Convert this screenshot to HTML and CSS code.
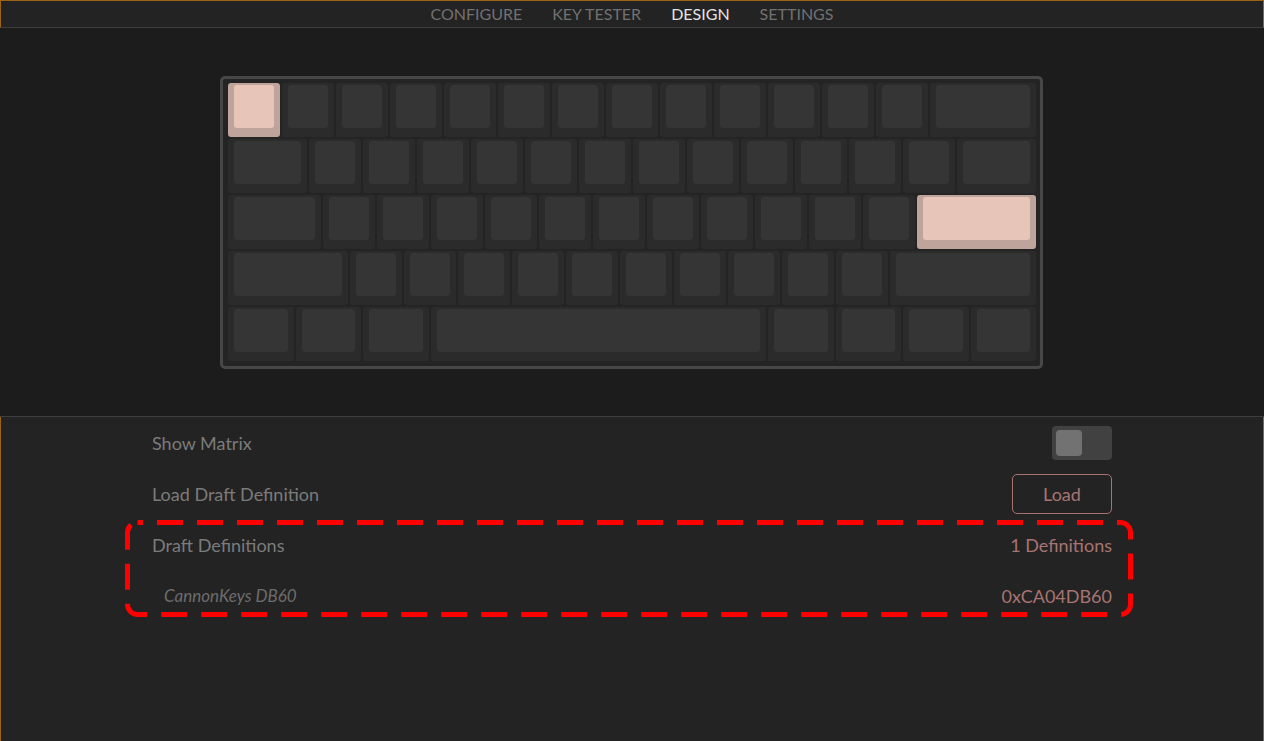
FILE: index.html
```html
<!DOCTYPE html>
<html lang="en">
<head>
<meta charset="utf-8">
<title>VIA - Design</title>
<link rel="stylesheet" href="styles.css">
</head>
<body>
<div class="app">
  <nav class="topbar">
    <a class="tab">CONFIGURE</a>
    <a class="tab">KEY TESTER</a>
    <a class="tab active">DESIGN</a>
    <a class="tab">SETTINGS</a>
  </nav>

  <section class="stage">
    <div class="board">
      <div class="row">
        <div class="key u1 sel"><div class="cap"></div></div>
        <div class="key u1"><div class="cap"></div></div>
        <div class="key u1"><div class="cap"></div></div>
        <div class="key u1"><div class="cap"></div></div>
        <div class="key u1"><div class="cap"></div></div>
        <div class="key u1"><div class="cap"></div></div>
        <div class="key u1"><div class="cap"></div></div>
        <div class="key u1"><div class="cap"></div></div>
        <div class="key u1"><div class="cap"></div></div>
        <div class="key u1"><div class="cap"></div></div>
        <div class="key u1"><div class="cap"></div></div>
        <div class="key u1"><div class="cap"></div></div>
        <div class="key u1"><div class="cap"></div></div>
        <div class="key u2"><div class="cap"></div></div>
      </div>
      <div class="row">
        <div class="key u15"><div class="cap"></div></div>
        <div class="key u1"><div class="cap"></div></div>
        <div class="key u1"><div class="cap"></div></div>
        <div class="key u1"><div class="cap"></div></div>
        <div class="key u1"><div class="cap"></div></div>
        <div class="key u1"><div class="cap"></div></div>
        <div class="key u1"><div class="cap"></div></div>
        <div class="key u1"><div class="cap"></div></div>
        <div class="key u1"><div class="cap"></div></div>
        <div class="key u1"><div class="cap"></div></div>
        <div class="key u1"><div class="cap"></div></div>
        <div class="key u1"><div class="cap"></div></div>
        <div class="key u1"><div class="cap"></div></div>
        <div class="key u15"><div class="cap"></div></div>
      </div>
      <div class="row">
        <div class="key u175"><div class="cap"></div></div>
        <div class="key u1"><div class="cap"></div></div>
        <div class="key u1"><div class="cap"></div></div>
        <div class="key u1"><div class="cap"></div></div>
        <div class="key u1"><div class="cap"></div></div>
        <div class="key u1"><div class="cap"></div></div>
        <div class="key u1"><div class="cap"></div></div>
        <div class="key u1"><div class="cap"></div></div>
        <div class="key u1"><div class="cap"></div></div>
        <div class="key u1"><div class="cap"></div></div>
        <div class="key u1"><div class="cap"></div></div>
        <div class="key u1"><div class="cap"></div></div>
        <div class="key u225 sel"><div class="cap"></div></div>
      </div>
      <div class="row">
        <div class="key u225"><div class="cap"></div></div>
        <div class="key u1"><div class="cap"></div></div>
        <div class="key u1"><div class="cap"></div></div>
        <div class="key u1"><div class="cap"></div></div>
        <div class="key u1"><div class="cap"></div></div>
        <div class="key u1"><div class="cap"></div></div>
        <div class="key u1"><div class="cap"></div></div>
        <div class="key u1"><div class="cap"></div></div>
        <div class="key u1"><div class="cap"></div></div>
        <div class="key u1"><div class="cap"></div></div>
        <div class="key u1"><div class="cap"></div></div>
        <div class="key u275"><div class="cap"></div></div>
      </div>
      <div class="row">
        <div class="key u125"><div class="cap"></div></div>
        <div class="key u125"><div class="cap"></div></div>
        <div class="key u125"><div class="cap"></div></div>
        <div class="key u625"><div class="cap"></div></div>
        <div class="key u125"><div class="cap"></div></div>
        <div class="key u125"><div class="cap"></div></div>
        <div class="key u125"><div class="cap"></div></div>
        <div class="key u125"><div class="cap"></div></div>
      </div>
    </div>
  </section>

  <section class="panel">
    <div class="settings">
      <div class="setting">
        <span class="label">Show Matrix</span>
        <div class="toggle"><div class="knob"></div></div>
      </div>
      <div class="setting">
        <span class="label">Load Draft Definition</span>
        <button class="btn">Load</button>
      </div>
      <div class="setting">
        <span class="label">Draft Definitions</span>
        <span class="value">1 Definitions</span>
      </div>
      <div class="setting">
        <span class="label sub">CannonKeys DB60</span>
        <span class="value">0xCA04DB60</span>
      </div>
      <svg class="highlight" width="1008" height="97" viewBox="0 0 1008 97" aria-hidden="true">
        <rect x="2.5" y="2.5" width="1003" height="92" rx="10" ry="10" fill="none" stroke="#ff0000" stroke-width="5" stroke-dasharray="26 14" stroke-dashoffset="20.5"/>
      </svg>
    </div>
  </section>
</div>
</body>
</html>
```

FILE: styles.css
```css
* { box-sizing: border-box; }

html, body {
  margin: 0;
  padding: 0;
  background: #232323;
  font-family: "Lato", "Liberation Sans", sans-serif;
}

.app {
  width: 1264px;
  height: 741px;
  display: flex;
  flex-direction: column;
  overflow: hidden;
}

/* ---------- top menu ---------- */
.topbar {
  height: 28px;
  flex: none;
  display: flex;
  justify-content: center;
  align-items: center;
  background: #232323;
  border-top: 1px solid #9b6414;
  border-left: 1px solid #9b6414;
  border-right: 1px solid #9b6414;
  border-bottom: 1px solid #3d3d3d;
  gap: 30px;
}

.tab {
  font-size: 16px;
  color: #717171;
  line-height: 26px;
}

.tab.active {
  color: #e4e4e4;
}

/* ---------- keyboard stage ---------- */
.stage {
  height: 389px;
  flex: none;
  display: flex;
  justify-content: center;
  align-items: center;
  background: #1c1c1c;
  border-bottom: 1px solid #3e3e3e;
}

.board {
  display: flex;
  flex-direction: column;
  gap: 2px;
  background: #242424;
  border: 3px solid #474747;
  border-radius: 5px;
  padding: 4px 4px 5px 5px;
  margin-left: -1px;
}

.row {
  display: flex;
  gap: 2px;
}

.key {
  height: 54px;
  background: #2b2b2b;
  border-radius: 3px;
  padding: 2px 6px 9px;
}

.cap {
  height: 100%;
  background: #363536;
  border-radius: 3px;
}

.key.sel { background: #bea49b; }
.key.sel .cap { background: #e7c5b9; }

.u1   { width: 52px; }
.u125 { width: 65.5px; }
.u15  { width: 79px; }
.u175 { width: 92.5px; }
.u2   { width: 106px; }
.u225 { width: 119.5px; }
.u275 { width: 146.5px; }
.u625 { width: 335.5px; }

/* ---------- settings panel ---------- */
.panel {
  flex: 1;
  background: #232323;
  border-left: 1px solid #9b6414;
  border-right: 1px solid #9b6414;
}

.settings {
  position: relative;
  width: 960px;
  margin: 0 auto;
}

.setting {
  height: 51px;
  display: flex;
  justify-content: space-between;
  align-items: center;
}

.label {
  font-size: 18px;
  color: #7b7b7b;
}

.label.sub {
  font-size: 17px;
  font-style: italic;
  color: #6c6c6c;
  padding-left: 12px;
}

.value {
  font-size: 18px;
  color: #a77472;
}

.toggle {
  width: 60px;
  height: 34px;
  background: #414141;
  border-radius: 4px;
  padding: 4px;
}

.knob {
  width: 26px;
  height: 26px;
  background: #727272;
  border-radius: 4px;
}

.btn {
  width: 100px;
  height: 40px;
  background: transparent;
  border: 1px solid #a57471;
  border-radius: 5px;
  color: #a77472;
  font-family: inherit;
  font-size: 18px;
  padding: 0;
}

.highlight {
  position: absolute;
  left: -27px;
  top: 103px;
  pointer-events: none;
}
```
